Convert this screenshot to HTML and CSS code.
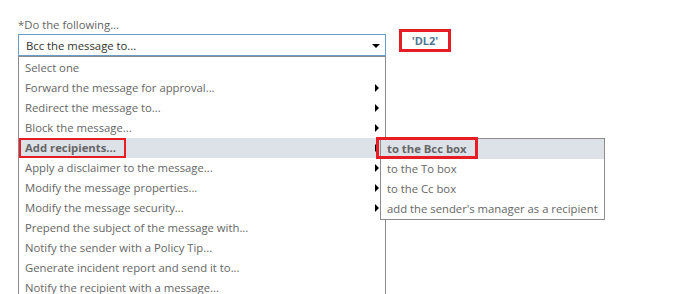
FILE: index.html
```html
<!DOCTYPE html>
<html lang="en">
<head>
  <meta charset="UTF-8" />
  <title>Do the following</title>
  <link rel="stylesheet" href="styles.css">
</head>
<body>
  <div class="rule">
    <div class="action">
      <div class="label">*Do the following...</div>
      <div class="select">
        <span>Bcc the message to...</span>
        <span class="caret"></span>
      </div>
      <ul class="menu">
        <li>Select one</li>
        <li class="has-sub">Forward the message for approval...</li>
        <li class="has-sub">Redirect the message to...</li>
        <li class="has-sub">Block the message...</li>
        <li class="has-sub active">
          <span class="mark">Add recipients...</span>
          <ul class="submenu">
            <li class="active"><span class="mark">to the Bcc box</span></li>
            <li>to the To box</li>
            <li>to the Cc box</li>
            <li>add the sender's manager as a recipient</li>
          </ul>
        </li>
        <li class="has-sub">Apply a disclaimer to the message...</li>
        <li class="has-sub">Modify the message properties...</li>
        <li class="has-sub">Modify the message security...</li>
        <li>Prepend the subject of the message with...</li>
        <li>Notify the sender with a Policy Tip...</li>
        <li>Generate incident report and send it to...</li>
        <li>Notify the recipient with a message...</li>
      </ul>
    </div>
    <div class="value">
      <span class="mark tag">'DL2'</span>
    </div>
  </div>
</body>
</html>
```

FILE: styles.css
```css
body {
  margin: 0;
  background: #fff;
  font-family: "Open Sans", "Noto Sans", Arial, sans-serif;
  font-size: 11.3px;
  color: #666;
  overflow: hidden;
}

.rule {
  display: flex;
  align-items: flex-start;
  padding: 15px 0 0 18px;
}

.action {
  width: 368px;
}

.label {
  height: 19px;
  line-height: 19px;
}

.select {
  display: flex;
  justify-content: space-between;
  align-items: center;
  height: 20px;
  padding: 0 5px 0 7px;
  border: 1px solid #6a9ec8;
  color: #333;
}

.caret {
  width: 0;
  height: 0;
  border-left: 4px solid transparent;
  border-right: 4px solid transparent;
  border-top: 4px solid #000;
  margin-top: 2px;
}

.menu {
  list-style: none;
  margin: 0;
  padding: 1px 0 0;
  border: 1px solid #8c8c8c;
  border-bottom: none;
  height: 280px;
}

.menu li {
  position: relative;
  height: 20px;
  line-height: 20px;
  padding-left: 6px;
  white-space: nowrap;
}

.menu .has-sub::after {
  content: "";
  position: absolute;
  right: 6px;
  top: 6px;
  border-top: 4px solid transparent;
  border-bottom: 4px solid transparent;
  border-left: 4px solid #000;
}

.menu li.active {
  background: #dde1e8;
}

.active > .mark {
  font-weight: bold;
}

.menu > li.active {
  padding-left: 0;
}

.menu > li.active > .mark {
  display: inline-block;
  height: 20px;
  line-height: 16px;
  box-sizing: border-box;
  padding: 0 8px 0 4px;
  border: 2px solid #e81c24;
}

.submenu {
  list-style: none;
  margin: 0;
  padding: 0;
  position: absolute;
  left: 361px;
  top: 0;
  width: 223px;
  background: #fff;
  border: 1px solid #8c8c8c;
  z-index: 2;
}

.submenu li {
  padding-left: 6px;
  font-weight: normal;
}

.submenu li.active {
  padding-left: 0;
}

.submenu li.active .mark {
  display: inline-block;
  box-sizing: border-box;
  height: 22px;
  line-height: 18px;
  margin: -3px 0 0 -5px;
  padding: 0 8px 0 8px;
  border: 3px solid #e81c24;
}

.value {
  padding: 14px 0 0 13px;
}

.tag {
  display: inline-block;
  box-sizing: border-box;
  width: 52px;
  height: 23px;
  line-height: 17px;
  text-align: center;
  border: 3px solid #e81c24;
  color: #4f7593;
  font-size: 11px;
  font-weight: bold;
}
```
